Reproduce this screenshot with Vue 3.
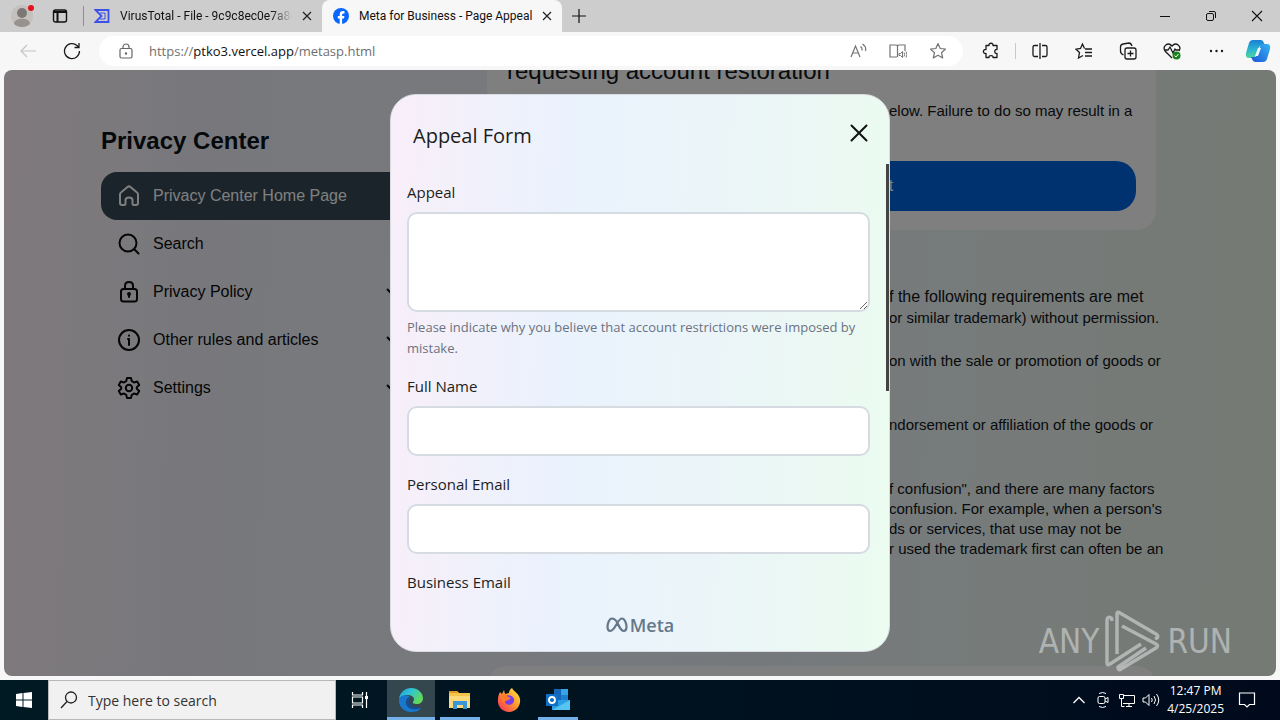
<script setup>
import { ref } from 'vue'

const tabs = [
  { title: 'VirusTotal - File - 9c9c8ec0e7a8e7', icon: 'vt', active: false },
  { title: 'Meta for Business - Page Appeal', icon: 'fb', active: true }
]
const menu = [
  { label: 'Privacy Center Home Page', icon: 'home', active: true },
  { label: 'Search', icon: 'search' },
  { label: 'Privacy Policy', icon: 'lock', more: true },
  { label: 'Other rules and articles', icon: 'info', more: true },
  { label: 'Settings', icon: 'gear', more: true }
]
const fields = [
  { id: 'full-name', label: 'Full Name', type: 'text' },
  { id: 'personal-email', label: 'Personal Email', type: 'email' },
  { id: 'business-email', label: 'Business Email', type: 'email' }
]
const appeal = ref('')
</script>

<template>
  <div class="desktop">
    <header class="tabbar">
      <button class="bare profile" aria-label="Profile">
        <svg width="32" height="28" viewBox="0 0 32 28">
          <circle cx="16" cy="14" r="11" fill="#c3c0be" />
          <circle cx="16" cy="11" r="5" fill="#7d7875" />
          <path d="M8 22c0-7 16-7 16 0-4 4-12 4-16 0z" fill="#98928e" />
          <circle cx="25" cy="6" r="3" fill="#e3101d" />
        </svg>
      </button>
      <button class="bare spaces" aria-label="Workspaces">
        <svg width="16" height="16" viewBox="0 0 16 16" fill="none" stroke="#111" stroke-width="1.4">
          <rect x="1.5" y="2" width="13" height="12" rx="2" /><path d="M2 4h12M5.5 5v9" stroke-width="2" />
        </svg>
      </button>
      <div v-for="t in tabs" :key="t.title" class="tab" :class="{ active: t.active }">
        <svg v-if="t.icon === 'vt'" width="16" height="16" viewBox="0 0 16 16" fill="none" stroke="#3d50e8" stroke-width="1.8">
          <path d="M1.500 2h13v12h-13L7.500 8z" /><path d="M6 5h5v6H6" stroke-width="1" />
        </svg>
        <svg v-else width="16" height="16" viewBox="0 0 16 16">
          <circle cx="8" cy="8" r="8" fill="#0866ff" />
          <path d="M6.700 16v-5.400H4.800V8h1.900V6.700c0-2.600 1.200-3.700 3.500-3.700.5 0 1 .1 1.300.2v2.200h-.9c-1.100 0-1.500.5-1.500 1.500V8h2.300l-.4 2.600H9.100V16z" fill="#fff" />
        </svg>
        <span class="tab-title">{{ t.title }}</span>
        <button class="bare" aria-label="Close tab">
          <svg width="10" height="10" viewBox="0 0 10 10" stroke="#222" stroke-width="1.2"><path d="M1 1l8 8M9 1l-8 8" /></svg>
        </button>
      </div>
      <button class="bare newtab" aria-label="New tab">
        <svg width="16" height="16" viewBox="0 0 16 16" stroke="#111" stroke-width="1.2"><path d="M8 1v14M1 8h14" /></svg>
      </button>
      <div class="window-controls">
        <button class="bare" aria-label="Minimize"><svg width="12" height="12" viewBox="0 0 12 12" stroke="#111"><path d="M1 6.500h10" /></svg></button>
        <button class="bare" aria-label="Restore"><svg width="12" height="12" viewBox="0 0 12 12" fill="none" stroke="#111"><rect x="1.500" y="3.500" width="7" height="7" rx="1.500" /><path d="M4 1.500h5q1.500 0 1.500 1.500v5" /></svg></button>
        <button class="bare" aria-label="Close"><svg width="12" height="12" viewBox="0 0 12 12" stroke="#111" stroke-width="1.100"><path d="M1 1l10 10M11 1L1 11" /></svg></button>
      </div>
    </header>

    <nav class="toolbar">
      <button class="bare" aria-label="Back"><svg width="18" height="18" viewBox="0 0 18 18" fill="none" stroke="#c4c4c4" stroke-width="1.200"><path d="M17 9H2M8 3L2 9l6 6" /></svg></button>
      <button class="bare" aria-label="Refresh"><svg width="18" height="18" viewBox="0 0 18 18" fill="none" stroke="#1b1b1b" stroke-width="1.300"><path d="M16.500 9A7.500 7.500 0 1 1 14 3.500l2 2M16 1v4.500h-4.500" /></svg></button>
      <div class="address">
        <svg width="14" height="16" viewBox="0 0 14 16" fill="none" stroke="#666" stroke-width="1.200"><rect x="1" y="5.500" width="12" height="9.500" rx="1.500" /><path d="M4 5.500V4a3 3 0 0 1 6 0v1.500" /><circle cx="7" cy="10.500" r=".6" /></svg>
        <span class="url">https://<b>ptko3.vercel.app</b>/metasp.html</span>
        <button class="bare" aria-label="Read aloud"><svg width="18" height="18" viewBox="0 0 18 18" fill="none" stroke="#737373" stroke-width="1.200"><path d="M2 15L6.500 4 11 15M3.500 11h6M11.500 4.500q2 1.500 1.500 4M13.500 2q4 2.500 3 7" /></svg></button>
        <button class="bare" aria-label="Immersive reader"><svg width="18" height="18" viewBox="0 0 18 18" fill="none" stroke="#737373" stroke-width="1.200"><path d="M8 15H1V3h6q1 0 1.500 1v11M8.500 4q.5-1 1.500-1h6v6" /><path d="M10 11.500h1.500l2-2v6l-2-2H10zM15 10.500q1.500 2 0 4M17 9.500q2 3 0 6" stroke-width="1" /></svg></button>
        <button class="bare" aria-label="Favorite"><svg width="18" height="18" viewBox="0 0 18 18" fill="none" stroke="#737373" stroke-width="1.200" stroke-linejoin="round"><path d="M9 1.500l2.200 5 5.300.6-4 3.600 1.200 5.300L9 13.300 4.300 16l1.200-5.300-4-3.600 5.300-.6z" /></svg></button>
      </div>
      <div class="tools">
        <button class="bare" aria-label="Extensions"><svg width="18" height="18" viewBox="0 0 18 18" fill="none" stroke="#1b1b1b" stroke-width="1.300" stroke-linejoin="round"><path d="M4 3.500h3c-.5-3 4.500-3 4 0h4v4c-3-.5-3 4.500 0 4v4h-4c.5-2.500-4.500-2.500-4 0H4v-4c-3.500.5-3.500-4.500 0-4z" /></svg></button>
        <i class="divider"></i>
        <button class="bare" aria-label="Split screen"><svg width="18" height="18" viewBox="0 0 18 18" fill="none" stroke="#1b1b1b" stroke-width="1.300"><path d="M7 3.500H3.500Q2 3.500 2 5v8q0 1.500 1.500 1.500H7M11 3.500h3.500Q16 3.500 16 5v8q0 1.500-1.500 1.500H11M9 1v16" /></svg></button>
        <button class="bare" aria-label="Favorites list"><svg width="18" height="18" viewBox="0 0 18 18" fill="none" stroke="#1b1b1b" stroke-width="1.300"><path d="M9.500 6.500L7.500 2l-2 4.500-4.500.7 3.500 3.300-1 5.500 4.500-2.500M10 7h7M10 10.500h7M10 14h7" /></svg></button>
        <button class="bare" aria-label="Collections"><svg width="18" height="18" viewBox="0 0 18 18" fill="none" stroke="#1b1b1b" stroke-width="1.300"><rect x="6" y="6" width="11" height="11" rx="2" /><path d="M11.500 8.500v6M8.500 11.500h6M4.500 13C2 12 1.500 11 1.500 9V5q0-2.500 2.500-3l6-1q2 0 3 3" /></svg></button>
        <button class="bare" aria-label="Browser essentials"><svg width="18" height="18" viewBox="0 0 18 18" fill="none" stroke="#1b1b1b" stroke-width="1.300"><path d="M9 16L2 9C-1 4 5-.5 9 4c4-4.500 10 0 7 5M1 8h4l2-3 3 6 2-4 1 1h4" /><circle cx="13.500" cy="13.500" r="4" fill="#17831b" stroke="none" /><path d="M11.500 13.500l1.500 1.500 2.500-3" stroke="#fff" stroke-width="1" /></svg></button>
        <button class="bare" aria-label="More"><svg width="18" height="18" viewBox="0 0 18 18" fill="#1b1b1b"><circle cx="4" cy="9" r="1.200" /><circle cx="9.500" cy="9" r="1.200" /><circle cx="15" cy="9" r="1.200" /></svg></button>
        <button class="bare" aria-label="Copilot">
          <svg width="26" height="26" viewBox="0 0 26 26">
            <defs>
              <linearGradient id="ca" x1="0" y1="0" x2="0" y2="1"><stop offset="0" stop-color="#1b7fd6" /><stop offset=".55" stop-color="#2bb6cf" /><stop offset="1" stop-color="#52d69a" /></linearGradient>
              <linearGradient id="cb" x1="0" y1="1" x2="1" y2="0"><stop offset="0" stop-color="#1d55d8" /><stop offset="1" stop-color="#35b5f0" /></linearGradient>
            </defs>
            <path d="M8 2h8q2 0 3 3l1 3h-4q-2 0-3 3l-2 6q-1 3-4 3H4q-4 0-3-5L4 5q1-3 4-3z" fill="url(#ca)" />
            <path d="M18 24h-8q-2 0-3-3l-1-2h3q3 0 4-4l2-6q1-3 4-3h3q4 0 3 5l-3 10q-1 3-4 3z" fill="url(#cb)" />
            <path d="M13 10h3l-3 8h-3z" fill="#eaf6fb" />
          </svg>
        </button>
      </div>
    </nav>

    <main class="viewport">
      <div class="page">
        <aside class="sidebar">
          <h1>Privacy Center</h1>
          <a v-for="m in menu" :key="m.label" href="#" class="item" :class="{ current: m.active }">
            <svg width="24" height="24" viewBox="0 0 24 24" fill="none" stroke="currentColor" stroke-width="2" stroke-linejoin="round" stroke-linecap="round">
              <path v-if="m.icon === 'home'" d="M3 10.500Q3 9 4.500 8L10.500 3q1.500-1.200 3 0l6 5Q21 9 21 10.500V19q0 2-2 2h-2q-1.500 0-1.500-1.500V16q0-2.500-3.500-2.500T8.500 16v3.500Q8.500 21 7 21H5q-2 0-2-2z" />
              <g v-else-if="m.icon === 'search'"><circle cx="11" cy="11" r="8.500" /><path d="M17.500 17.500L21.500 21.500" /></g>
              <g v-else-if="m.icon === 'lock'"><rect x="4" y="9" width="16" height="12.500" rx="2.500" /><path d="M8 9V6q0-4 4-4t4 4v3" /><circle cx="12" cy="14" r="1" /><path d="M12 15v2" /></g>
              <g v-else-if="m.icon === 'info'"><circle cx="12" cy="12" r="10" /><path d="M11 11h1v6M12 7.500v.2" /></g>
              <g v-else><path d="M10 2h4l.8 3.200 2.200 1.300 3.200-1 2 3.500-2.400 2.200v1.600l2.400 2.200-2 3.500-3.200-1-2.200 1.300L14 22h-4l-.8-3.200L7 17.500l-3.200 1-2-3.500 2.400-2.200v-1.600L1.800 9l2-3.500 3.200 1 2.200-1.300z" /><circle cx="12" cy="12" r="3.200" /></g>
            </svg>
            <span>{{ m.label }}</span>
            <svg v-if="m.more" class="chevron" width="16" height="16" viewBox="0 0 16 16" fill="none" stroke="currentColor" stroke-width="2"><path d="M2 5l6 6 6-6" /></svg>
          </a>
        </aside>
        <section class="content">
          <div class="card notice">
            <h2>requesting account restoration</h2>
            <p class="tail">elow. Failure to do so may result in a</p>
            <button class="primary">Submit your request</button>
          </div>
          <div class="tail policy">
            <p class="lead">f the following requirements are met</p>
            <p class="tall">or similar trademark) without permission.</p>
            <p class="gap">on with the sale or promotion of goods or</p>
            <p class="gap">ndorsement or affiliation of the goods or</p>
            <p>f confusion", and there are many factors<br />confusion. For example, when a person's<br />ds or services, that use may not be<br />r used the trademark first can often be an</p>
          </div>
          <div class="card next"></div>
        </section>
      </div>

      <div class="overlay">
        <form class="dialog" role="dialog" aria-label="Appeal Form" @submit.prevent>
          <div class="dialog-head">
            <h2>Appeal Form</h2>
            <button type="button" class="bare" aria-label="Close form"><svg width="18" height="18" viewBox="0 0 18 18" stroke="#111" stroke-width="2" stroke-linecap="round"><path d="M1.500 1.500l15 15M16.500 1.500l-15 15" /></svg></button>
          </div>
          <div class="dialog-body">
            <label for="appeal">Appeal</label>
            <textarea id="appeal" v-model="appeal"></textarea>
            <p class="hint">Please indicate why you believe that account restrictions were imposed by mistake.</p>
            <template v-for="f in fields" :key="f.id">
              <label :for="f.id">{{ f.label }}</label>
              <input :id="f.id" :type="f.type" />
            </template>
            <i class="thumb"></i>
          </div>
          <div class="brand">
            <svg width="22" height="16" viewBox="0 0 22 16" fill="none" stroke="#65788a" stroke-width="2.200"><path d="M11 5C9 2 7.500 1.500 6 1.500 3.500 1.500 1.500 6 1.500 10c0 2.500 1 4 2.800 4C6.500 14 8 12 11 6.500 13 3 14.500 1.500 16 1.500c2.500 0 4.500 4.500 4.500 8.500 0 2.500-1 4-2.800 4-2.200 0-3.700-2.500-6.700-9z" /></svg>
            <span>Meta</span>
          </div>
        </form>
      </div>

      <div class="watermark">
        <span>ANY</span>
        <svg width="58" height="62" viewBox="0 0 58 62" fill="none" stroke="currentColor" stroke-width="3.500" stroke-linejoin="round">
          <path d="M8 11L7.500 8Q3 6 3 10v43q0 3 3 1L37 34" /><path d="M13 44V4q0-3 3-1l36 21q3 2 1 4l-2 1" /><path d="M18 16l34 18q3 2 0 4L17 59q-3 2-3-2l28-19" />
        </svg>
        <span>RUN</span>
      </div>
    </main>

    <footer class="taskbar">
      <button class="bare start" aria-label="Start"><svg width="16" height="16" viewBox="0 0 16 16" fill="#fff"><path d="M0 2l6.500-1v6.500H0zM7.500.9L16 0v7.500H7.500zM0 8.500h6.500V15L0 14zM7.500 8.500H16V16l-8.500-1z" /></svg></button>
      <label class="search">
        <svg width="18" height="18" viewBox="0 0 18 18" fill="none" stroke="#222" stroke-width="1.300"><circle cx="11" cy="6.500" r="5.500" /><path d="M7 10.500L1 17" /></svg>
        <input type="text" placeholder="Type here to search" aria-label="Type here to search" />
      </label>
      <button class="bare app" aria-label="Task view"><svg width="18" height="18" viewBox="0 0 18 18" fill="none" stroke="#fff" stroke-width="1.200"><path d="M1.500 1v3h10V1M1.500 17v-3h10v3M1.500 6h10v6h-10zM15.500 1v16" /><path d="M14 5h3v3h-3z" fill="#fff" stroke="none" /></svg></button>
      <button class="bare app open focused" aria-label="Edge">
        <svg width="26" height="26" viewBox="0 0 26 26">
          <defs><linearGradient id="eg" x1="0" x2="1" y1="0" y2=".5"><stop offset="0" stop-color="#1c9de0" /><stop offset=".5" stop-color="#30c6d0" /><stop offset="1" stop-color="#62d85a" /></linearGradient></defs>
          <path d="M1 12C2 5 7 1 13 1c7 0 12 5 12 10 0 4-3 6-6 6-3 0-5-1-4-2 3-4-1-7-5-7-4 0-8 2-9 4z" fill="url(#eg)" />
          <path d="M1 12c2-4 8-5 11-2-4 1-5 5-3 9 2 3 6 4 14 2-2 3-6 4-10 4C6 25 0 19 1 12z" fill="#1878cf" />
          <path d="M12 10c-5 2-5 10 2 12 4 1 7 0 9-2-7 2-12-1-11-7z" fill="#114e9c" />
        </svg>
      </button>
      <button class="bare app open" aria-label="File Explorer">
        <svg width="24" height="22" viewBox="0 0 24 22"><path d="M1 2h8l2 2h11v15H1z" fill="#f5c34a" /><path d="M1 2h8l2 2H1z" fill="#e09b22" /><path d="M1 7h21v12H1z" fill="#fbd979" /><path d="M5 12h14v8h-4v-4H9v4H5z" fill="#3b96d8" /></svg>
      </button>
      <button class="bare app" aria-label="Firefox">
        <svg width="24" height="24" viewBox="0 0 24 24">
          <defs><linearGradient id="ff" x1="1" x2="0" y1="0" y2="1"><stop offset="0" stop-color="#fff04a" /><stop offset=".45" stop-color="#ff9a2c" /><stop offset="1" stop-color="#f5265f" /></linearGradient></defs>
          <path d="M15 0c1 3 7 5 8 11 1 7-4 13-11 13S0 18 1 11c0-3 1-5 2-7l2 2 2-4 1 4 4-1c0-2 1-4 3-5z" fill="url(#ff)" />
          <path d="M7 9c3-3 9-2 10 2 1 5-5 8-9 4-2-2 1-2 3-3L7 11z" fill="#7b3de0" />
          <path d="M5 7c3-1 5 0 6 2 3 0 3 2 0 3-3 0-4 2-2 4-4-1-6-5-4-9z" fill="#ff7a2b" />
        </svg>
      </button>
      <button class="bare app open" aria-label="Outlook">
        <svg width="26" height="24" viewBox="0 0 26 24"><path d="M9 1h14v12H9z" fill="#1666b8" /><path d="M16 1h7v6h-7z" fill="#35a5e8" /><path d="M16 7h7v6h-7z" fill="#1c80d0" /><path d="M7 12h18v10H7z" fill="#2c9ee4" /><path d="M25 12L7 22h18z" fill="#55c4f2" /><path d="M1 6h12v12H1z" fill="#0f6fc6" /><circle cx="7" cy="12" r="3" fill="none" stroke="#fff" stroke-width="1.800" /></svg>
      </button>
      <div class="tray">
        <svg width="24" height="14" viewBox="0 0 14 14" fill="none" stroke="#fff" stroke-width="1.300"><path d="M1.500 10L7 4.500l5.500 5.500" /></svg>
        <svg width="24" height="18" viewBox="0 0 14 18" fill="none" stroke="#fff"><rect x="2" y="5.500" width="7" height="7" rx="1.500" /><path d="M9 8l3-1.500v5L9 10M3 2.500q3.500-2 7 0M3 15.500q3.500 2 7 0" /></svg>
        <svg width="24" height="16" viewBox="0 0 18 16" fill="none" stroke="#fff"><path d="M6 3.500h10.500v8H5M8 14.500h6M11 11.500v3M1.500 2.500h4v4h-4zM3.500 6.500v8h3" /></svg>
        <svg width="24" height="16" viewBox="0 0 18 16" fill="none" stroke="#fff"><path d="M1 6h2.500L7 2.500v11L3.500 10H1zM9.500 6q1.500 2 0 4M12 4q3 4 0 8M14.500 2q4.500 6 0 12" /></svg>
        <div class="clock"><span>12:47 PM</span><span>4/25/2025</span></div>
        <svg width="24" height="18" viewBox="0 0 18 18" fill="none" stroke="#fff" stroke-width="1.200"><path d="M1.500 2h15v11.500h-5L9 16l-2.500-2.500h-5z" /></svg>
      </div>
    </footer>
  </div>
</template>

<style>
html, body { margin: 0; overflow: hidden; }
</style>

<style scoped>
* { box-sizing: border-box; }
svg { display: block; flex: none; }
h1, h2, p { margin: 0; }
.bare { border: 0; background: none; padding: 0; display: flex; align-items: center; justify-content: center; flex: none; }
.desktop { height: 100vh; display: flex; flex-direction: column; background: #f7f7f7; font-family: "Open Sans", "Noto Sans", sans-serif; color: #111; }

.tabbar { height: 32px; flex: none; display: flex; align-items: center; background: #cdcdcd; font-family: Roboto, "Open Sans", sans-serif; font-size: 12px; }
.profile { width: 32px; margin-left: 6px; }
.spaces { width: 16px; margin: 0 15px 0 14px; }
.tab { height: 32px; width: 240px; display: flex; align-items: center; gap: 10px; padding: 0 10px; border-left: 1px solid transparent; }
.tab:not(.active) { width: 239px; border-image: linear-gradient(transparent 20%, #8e8e8e 20%, #8e8e8e 80%, transparent 80%) 1; }
.tab.active { background: #f7f7f7; border-radius: 8px 8px 0 0; }
.tab-title { flex: 1; overflow: hidden; white-space: nowrap; }
.tab:not(.active) .tab-title { mask-image: linear-gradient(90deg, #000 88%, transparent); }
.newtab { width: 34px; height: 32px; }
.window-controls { margin-left: auto; display: flex; }
.window-controls button { width: 46px; height: 32px; }

.toolbar { height: 38px; flex: none; display: flex; align-items: center; padding: 0 9px 0 19px; gap: 26px; }
.address { flex: 1; height: 30px; border-radius: 15px; background: #fff; display: flex; align-items: center; gap: 22px; padding: 0 16px 0 20px; margin-left: -8px; }
.url { flex: 1; font-size: 13px; color: #707070; margin-left: -6px; }
.url b { font-weight: 400; color: #111; }
.tools { display: flex; align-items: center; gap: 26px; margin-left: -7px; }
.divider { width: 1px; height: 16px; background: #c8c8c8; margin: 0 -11px; }
.tools button:last-child { margin-left: -6px; }

.viewport { position: relative; flex: 1; min-height: 0; margin: 0 4px 4px; border-radius: 8px; overflow: hidden; font-family: "Liberation Sans", Arial, sans-serif; background: linear-gradient(92deg, #fff3fa 0, #f0f1f8 15%, #eff3fb 36%, #ebf3f9 60%, #edf6f6 75%, #ecf5ee 88%, #ecf5ea 100%); }
.page { display: flex; height: 100%; padding: 0 120px 0 97px; }
.sidebar { width: 310px; flex: none; padding-top: 56px; }
.sidebar h1 { font-size: 24px; line-height: 30px; margin-bottom: 16px; color: #0a1317; }
.item { height: 48px; display: flex; align-items: center; gap: 12px; padding: 0 10px 0 16px; border-radius: 16px; color: #0a0a0a; font-size: 16px; text-decoration: none; }
.item.current { background: #344854; color: #fff; }
.chevron { margin-left: auto; }
.content { flex: 1; min-width: 0; margin-left: 76px; font-size: 15px; line-height: 20px; white-space: nowrap; color: #101418; }
.card { background: #fff; border-radius: 20px; }
.notice { height: 160px; padding: 0 20px; overflow: hidden; border-radius: 0 0 20px 20px; }
.notice h2 { font-size: 24px; font-weight: 400; line-height: 28px; margin: -13px 0 0; }
.tail { padding-left: 402px; }
.notice .tail { padding-left: 382px; margin: 16px 0 40px; }
.primary { display: block; width: 100%; height: 50px; border: 0; border-radius: 20px; background: #0064e0; color: #fff; font: 16px "Liberation Sans", Arial, sans-serif; }
.policy { padding-top: 56px; }
.lead, .tall { line-height: 21px; }
.lead { font-size: 16px; }
.tall { margin-bottom: 23px; }
.gap { margin-bottom: 44px; }
.next { height: 100px; margin-top: 107px; }

.overlay { position: absolute; inset: 0; background: rgba(0, 0, 0, 0.5); display: flex; justify-content: center; padding: 24px; }
.dialog { width: 500px; height: 100%; display: flex; flex-direction: column; border: 1px solid #d9dce3; border-radius: 26px; overflow: hidden; background: linear-gradient(92deg, #f8eef9 0, #f4f0fa 10%, #eaf2fd 35%, #ebf5f8 65%, #ebf9f2 90%, #ecfdf1 100%); font-family: "Open Sans", "Noto Sans", sans-serif; color: #1c1e21; }
.dialog-head { display: flex; justify-content: space-between; align-items: center; height: 69px; flex: none; padding: 12px 21px 0 22px; }
.dialog-head h2 { font-size: 20px; font-weight: 500; }
.dialog-head button { margin-bottom: 6px; }
.dialog-body { position: relative; flex: 1; min-height: 0; overflow: hidden; padding: 18px 19px 0 16px; }
label { display: block; font-size: 15px; line-height: 20px; margin-bottom: 10px; }
.dialog-body textarea, .dialog-body input { display: block; width: 100%; height: 50px; border: 2px solid #d5dbe1; border-radius: 10px; background: #fff; margin-bottom: 18px; outline: 0; }
.dialog-body textarea { height: 100px; margin-bottom: 5px; }
.hint { font-size: 13px; line-height: 21px; color: #6b7280; margin-bottom: 17px; }
.thumb { position: absolute; top: 0; right: 0; width: 3px; height: 227px; background: #444; }
.brand { height: 52px; flex: none; display: flex; align-items: center; justify-content: center; gap: 2px; color: #65788a; font-size: 18px; font-weight: 600; }

.watermark { position: absolute; right: 44px; bottom: 4px; display: flex; align-items: center; gap: 5px; font: 33px "DejaVu Sans Condensed", "DejaVu Sans", sans-serif; color: rgba(225, 228, 228, 0.55); }

.taskbar { height: 40px; flex: none; display: flex; align-items: stretch; background: linear-gradient(90deg, #001a23, #00121f 55%, #000a1c); color: #fff; }
.start { width: 48px; }
.search { width: 288px; margin: 0; background: #f1f1f1; border: 1px solid #b9b9b9; display: flex; align-items: center; gap: 10px; padding-left: 11px; }
.search input { flex: 1; min-width: 0; border: 0; background: none; outline: 0; padding: 0; font: 14px "Open Sans", "Noto Sans", sans-serif; }
.search input::placeholder { color: #333; opacity: 1; }
.app { width: 48px; margin-right: 1px; border-bottom: 3px solid transparent; border-top: 3px solid transparent; }
.app.open { border-image: linear-gradient(90deg, #76b0e8, #76b0e8) 0 0 3 0; margin-left: 4px; margin-right: 5px; width: 40px; }
.app.focused { background: #34474f; width: 48px; margin: 0 1px 0 2px; }
.tray { margin-left: auto; display: flex; align-items: center; padding-right: 21px; }
.clock { display: flex; flex-direction: column; align-items: center; font-size: 12px; line-height: 18px; margin: 0 11px 0 4px; }
</style>
